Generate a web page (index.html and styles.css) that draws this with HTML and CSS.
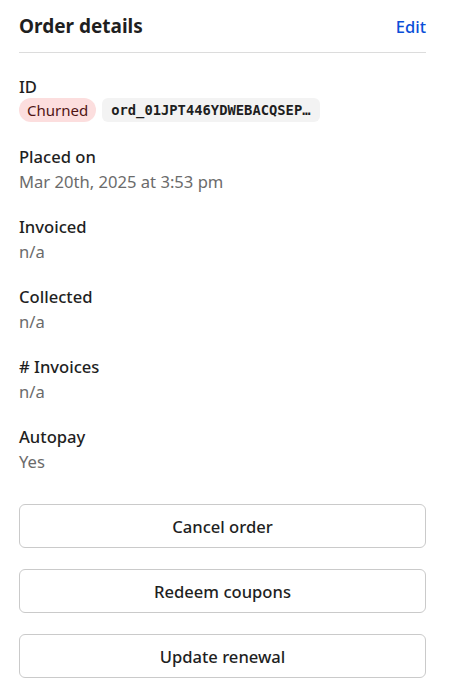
FILE: index.html
```html
<!DOCTYPE html>
<html>
<head>
<meta charset="utf-8">
<link rel="stylesheet" href="styles.css">
</head>
<body>
<div class="panel">
  <div class="header">
    <h2 class="title">Order details</h2>
    <a class="edit">Edit</a>
  </div>
  <div class="fields">
    <div class="field">
      <div class="label">ID</div>
      <div class="chips">
        <span class="badge">Churned</span>
        <span class="code">ord_01JPT446YDWEBACQSEP…</span>
      </div>
    </div>
    <div class="field">
      <div class="label">Placed on</div>
      <div class="value">Mar 20th, 2025 at 3:53 pm</div>
    </div>
    <div class="field">
      <div class="label">Invoiced</div>
      <div class="value">n/a</div>
    </div>
    <div class="field">
      <div class="label">Collected</div>
      <div class="value">n/a</div>
    </div>
    <div class="field">
      <div class="label"># Invoices</div>
      <div class="value">n/a</div>
    </div>
    <div class="field">
      <div class="label">Autopay</div>
      <div class="value">Yes</div>
    </div>
  </div>
  <div class="actions">
    <button class="btn">Cancel order</button>
    <button class="btn">Redeem coupons</button>
    <button class="btn">Update renewal</button>
  </div>
</div>
</body>
</html>
```
FILE: styles.css
```css
html, body {
  margin: 0;
  padding: 0;
  background: #fff;
}
body {
  font-family: "Noto Sans", "Open Sans", sans-serif;
  color: #1f1f1f;
}
.panel {
  width: 407px;
  padding: 12px 0 0 19px;
}
.header {
  display: flex;
  justify-content: space-between;
  align-items: center;
  padding-bottom: 11px;
  border-bottom: 1px solid #dcdcdc;
}
.title {
  margin: 0;
  font-size: 19px;
  font-weight: 700;
  line-height: 29px;
}
.edit {
  color: #0b4fd8;
  font-size: 16.5px;
  font-weight: 500;
}
.fields {
  display: flex;
  flex-direction: column;
  gap: 20px;
  padding-top: 21px;
}
.label {
  font-size: 16.6px;
  font-weight: 500;
  line-height: 25px;
}
.value {
  font-size: 16.6px;
  line-height: 25px;
  color: #6b6b6b;
}
.chips {
  display: flex;
  gap: 6px;
  margin-top: -1px;
  margin-bottom: 2px;
}
.badge {
  background: #fcdede;
  color: #4f1414;
  border-radius: 12px;
  padding: 0 8px;
  font-size: 15px;
  line-height: 24px;
}
.code {
  background: #f3f3f3;
  border-radius: 6px;
  padding: 0 9px;
  font-family: "DejaVu Sans Mono", monospace;
  font-weight: 700;
  font-size: 13.8px;
  line-height: 24px;
  color: #1e1e1e;
}
.actions {
  display: flex;
  flex-direction: column;
  gap: 21px;
  margin-top: 30px;
}
.btn {
  height: 44px;
  background: #fff;
  border: 1px solid #cacaca;
  border-radius: 6px;
  font-family: "Noto Sans", sans-serif;
  font-size: 16.6px;
  font-weight: 500;
  color: #1f1f1f;
}
```
